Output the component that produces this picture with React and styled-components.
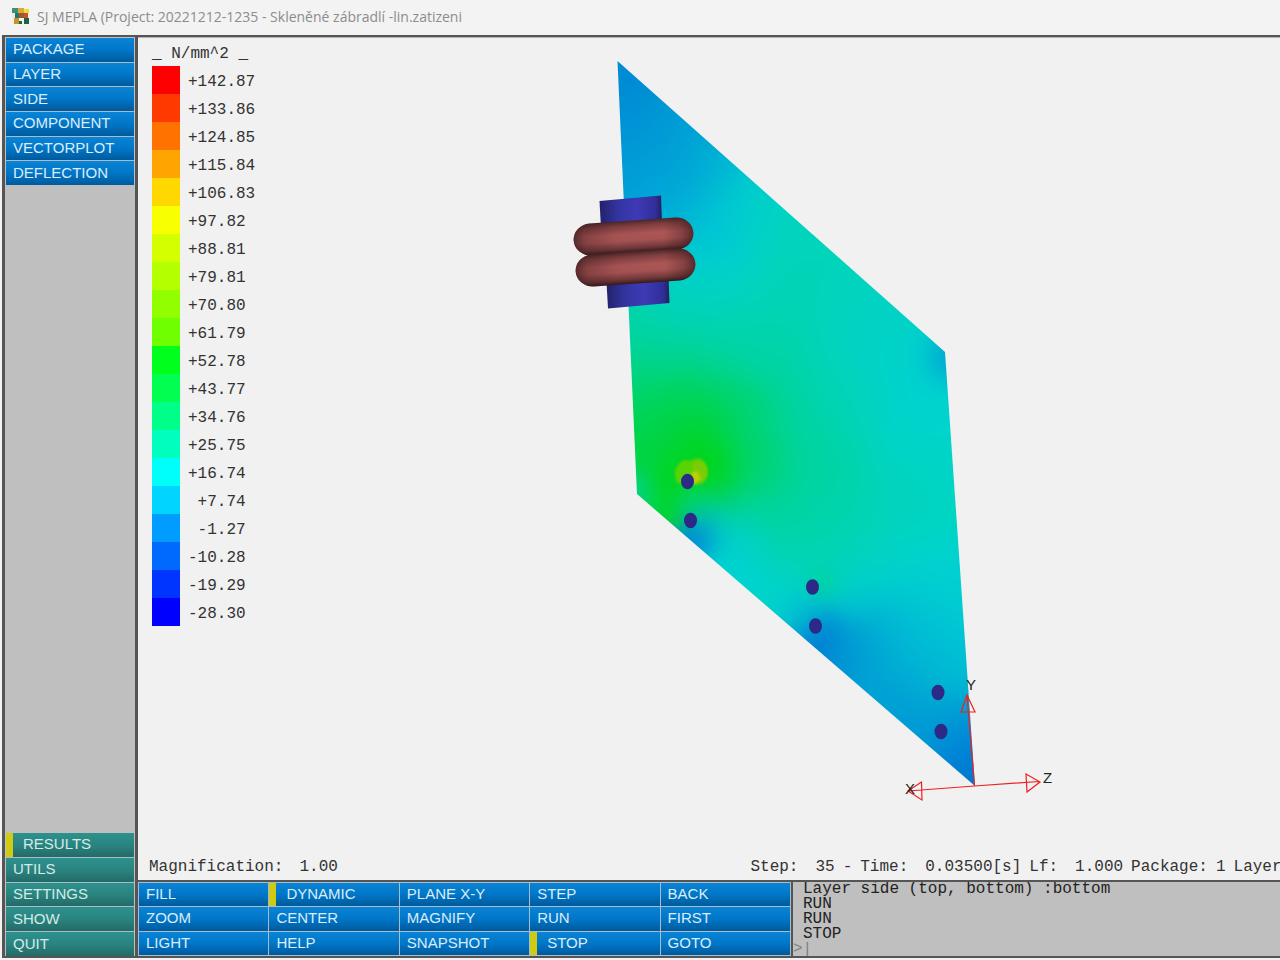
import React from 'react';
import styled, { createGlobalStyle, css } from 'styled-components';

const Global = createGlobalStyle`
  * { box-sizing: border-box; }
  body { margin: 0; background: #f1f1f1; }
`;

const MONO = '"Liberation Mono", monospace';
const SANS = '"Liberation Sans", sans-serif';

const Window = styled.div`
  display: flex;
  flex-direction: column;
  min-height: 100vh;
  padding: 0 0 2px 2px;
  background: #f2f2f2;
  overflow: hidden;
`;

const TitleBar = styled.header`
  display: flex;
  align-items: center;
  gap: 8px;
  height: 35px;
  padding: 0 0 2px 10px;
  background: #f3f3f3;
`;

const Title = styled.h1`
  margin: 0;
  font: 400 14px/20px "Open Sans", sans-serif;
  color: #8c8c8c;
  white-space: nowrap;
`;

const Body = styled.div`
  flex: 1;
  display: flex;
  border: solid #555;
  border-width: 2px 0 2px 3px;
`;

const Sidebar = styled.aside`
  display: flex;
  flex-direction: column;
  justify-content: space-between;
  flex: 0 0 133px;
  padding: 1px 1px 0 1px;
  border-right: 3px solid #555;
  background: #bfbfbf;
`;

const Menu = styled.nav`
  display: grid;
  grid-auto-rows: 1fr;
  gap: 1px;
  height: ${(p) => p.$height}px;
  background: #a9bccb;
`;

const MenuButton = styled.button`
  display: flex;
  align-items: center;
  min-width: 0;
  margin: 0;
  padding: 0 0 1px 7px;
  border: 0;
  font: 400 15px/16px ${SANS};
  color: #dcecf8;
  text-align: left;
  white-space: nowrap;
  background: linear-gradient(#0a84d6, #0076c8 50%, #005a9c);
  ${(p) => p.$tone === 'green' && css`
    color: #d4ebe8;
    background: linear-gradient(#2d918d, #2a8480 50%, #236a66);
  `}
  ${(p) => p.$active && css`
    padding-left: 10px;
    border-left: 7px solid #cfcb12;
  `}
`;

const Main = styled.main`
  flex: 1;
  min-width: 0;
  display: flex;
  flex-direction: column;
`;

const Viewport = styled.section`
  position: relative;
  flex: 1;
  display: flex;
  flex-direction: column;
  justify-content: space-between;
  border-top: 1px solid #b4b4b4;
  background: #f1f1f1;
  font: 400 16px/28px ${MONO};
  color: #333;
`;

const Scene = styled.svg`
  position: absolute;
  inset: 0;
  width: 100%;
  height: 100%;
`;

const Legend = styled.div`
  position: relative;
  padding: 0 0 0 14px;
`;

const LegendTitle = styled.div`
  height: 28px;
  line-height: 32px;
  white-space: pre;
`;

const LegendList = styled.ul`
  margin: 0;
  padding: 0;
  list-style: none;
`;

const LegendRow = styled.li`
  display: flex;
  gap: 8px;
  height: 28px;
  line-height: 32px;
  white-space: pre;
`;

const Swatch = styled.span`
  width: 28px;
  background: ${(p) => p.$color};
`;

const Status = styled.footer`
  position: relative;
  display: flex;
  padding-left: 11px;
  height: 28px;
  line-height: 30px;
  overflow: hidden;
  white-space: nowrap;
`;

const Magnification = styled.div`
  display: flex;
  gap: 16px;
  flex: 0 0 53%;
`;

const Readout = styled.div`
  display: flex;
  gap: 8px;
  flex: 1 0 auto;
  padding-left: 2px;
`;

const Field = styled.span`
  display: flex;
  gap: ${(p) => (p.$tight ? 8 : 17)}px;
`;

const Dock = styled.div`
  display: flex;
  height: 76px;
  border-top: 2px solid #555;
`;

const Tools = styled.nav`
  display: grid;
  grid-template-columns: repeat(5, 1fr);
  grid-auto-rows: 1fr;
  gap: 1px;
  flex: 0 0 655px;
  padding: 1px 1px 1px 1px;
  border-right: 2px solid #555;
  background: #a9bccb;
`;

const Console = styled.div`
  flex: 1;
  min-width: 0;
  background: #bfbfbf;
  font: 400 16px/15px ${MONO};
  color: #222;
  overflow: hidden;
`;

const Line = styled.div`
  height: 15px;
  padding-left: 10px;
  white-space: pre;
`;

const Prompt = styled.label`
  display: flex;
  height: 14px;
  color: #808080;
`;

const PromptInput = styled.input`
  flex: 1;
  min-width: 0;
  height: 14px;
  padding: 0;
  border: 0;
  outline: 0;
  background: transparent;
  font: inherit;
  color: inherit;
`;

const legend = [
  ['+142.87', '#ff0000'], ['+133.86', '#ff3a00'], ['+124.85', '#ff7200'], ['+115.84', '#ffa400'],
  ['+106.83', '#ffd800'], ['+97.82', '#f8ff00'], ['+88.81', '#d4ff00'], ['+79.81', '#b4ff00'],
  ['+70.80', '#92ff00'], ['+61.79', '#70ff00'], ['+52.78', '#00ff1c'], ['+43.77', '#00ff50'],
  ['+34.76', '#00ff88'], ['+25.75', '#00ffbe'], ['+16.74', '#00fff8'], [' +7.74', '#00d4ff'],
  [' -1.27', '#009cff'], ['-10.28', '#006aff'], ['-19.29', '#0034ff'], ['-28.30', '#0000ff'],
];

/* Stress samples on the pane: x, y, colour, reach */
const samples = [
  [618, 80, 0x008ad4], [640, 130, 0x0092d6], [690, 140, 0x00a2d4], [640, 180, 0x009ed8],
  [680, 190, 0x00a8d6], [722, 165, 0x00b8d4, 22], [752, 190, 0x00d0cc, 22], [690, 225, 0x00b8d6],
  [730, 215, 0x00ced4, 22], [780, 220, 0x00d4be], [712, 258, 0x00d2d4], [680, 290, 0x00d2c4],
  [640, 320, 0x00d4ac], [720, 300, 0x00d4bc], [800, 280, 0x00d4b6], [860, 310, 0x00d4be],
  [900, 330, 0x00d2c8], [947, 358, 0x0090d4, 15], [915, 375, 0x00d0d4], [880, 380, 0x00d4c4],
  [640, 365, 0x00d48c], [700, 350, 0x00d49c], [760, 350, 0x00d4aa], [840, 400, 0x00d4b4],
  [930, 430, 0x00d4cc], [640, 415, 0x00d454], [690, 410, 0x00d43c], [740, 420, 0x00d46c],
  [700, 447, 0x00d60c, 20], [650, 455, 0x00d43c, 22], [716, 470, 0x00d600, 16], [750, 465, 0x00d458, 22],
  [800, 430, 0x00d4a0], [636, 490, 0x00d4a0, 15], [668, 482, 0x00d610, 16], [668, 506, 0x00d430, 14],
  [690, 503, 0x00d488, 11], [716, 500, 0x00d44c, 16], [765, 500, 0x00d490], [700, 534, 0x0084da, 14],
  [714, 516, 0x00c8cc, 12], [735, 535, 0x00d0d4, 20], [745, 565, 0x00d2d4, 20], [785, 590, 0x00d4cc, 22],
  [790, 540, 0x00d4b0], [830, 500, 0x00d4a6], [900, 500, 0x00d4bc], [945, 490, 0x00d4c4],
  [850, 555, 0x00d4b8], [822, 583, 0x00d48c, 10], [900, 570, 0x00d4cc], [855, 595, 0x00ced0, 20],
  [803, 613, 0x00bcd4, 16], [822, 634, 0x0074d4, 16], [850, 650, 0x0090d4, 22], [870, 632, 0x00a4d4, 22],
  [905, 620, 0x00bcd4], [950, 595, 0x00d2d2], [960, 650, 0x00c4d4], [920, 655, 0x00b8d4],
  [895, 690, 0x00a0d4], [945, 682, 0x00bcd0, 18], [920, 720, 0x0098d4], [955, 710, 0x009cd4, 18],
  [962, 740, 0x0084d8, 20], [972, 776, 0x0078d0, 20],
];

const CELL = 5;

function fieldColor(x, y) {
  let total = 0;
  const rgb = [0, 0, 0];
  for (const [sx, sy, color, reach = 30] of samples) {
    const weight = Math.exp(-((x - sx) ** 2 + (y - sy) ** 2) / (2 * reach * reach)) + 1e-12;
    total += weight;
    rgb[0] += weight * (color >> 16);
    rgb[1] += weight * ((color >> 8) & 255);
    rgb[2] += weight * (color & 255);
  }
  return `rgb(${rgb.map((v) => Math.round(v / total)).join(',')})`;
}

/* Cells cover the pane plus a margin for the softening at its edges */
const cells = [];
for (let y = 50; y < 800; y += CELL) {
  const left = y < 494 ? 617 + ((y - 61) * 20) / 433 : 637 + ((y - 494) * 338) / 292;
  const right = y < 352 ? 617 + ((y - 61) * 328) / 291 : 945 + ((y - 352) * 30) / 434;
  const start = Math.floor((left - 25) / CELL) * CELL;
  for (let x = start; x < right + 25; x += CELL) {
    cells.push({ x, y, fill: fieldColor(x + CELL / 2, y + CELL / 2) });
  }
}

const holes = [[687.5, 481.5], [690.5, 520.5], [812.5, 587], [815.5, 626], [938, 692.5], [941, 731.5]];

function Ring({ cx, cy }) {
  return (
    <g transform={`translate(${cx} ${cy}) rotate(-4)`}>
      <rect x="-60" y="-16" width="120" height="32" rx="17" ry="16" fill="url(#ring)" />
      <rect x="-60" y="-16" width="120" height="32" rx="17" ry="16" fill="url(#ringEnds)" />
    </g>
  );
}

function PaneScene() {
  return (
    <Scene viewBox="138 38 1142 842" role="img" aria-label="Stress distribution on glass pane">
      <defs>
        <clipPath id="pane"><path d="M617.500 61 945 352 975 786 637 494z" /></clipPath>
        <filter id="soften" x="-5%" y="-5%" width="110%" height="110%" colorInterpolationFilters="sRGB">
          <feGaussianBlur stdDeviation="4" />
        </filter>
        <filter id="spotSoft" colorInterpolationFilters="sRGB"><feGaussianBlur stdDeviation="1.300" /></filter>
        <linearGradient id="ring" x1="0" y1="0" x2="0" y2="1">
          <stop offset="0" stopColor="#4c2628" />
          <stop offset=".16" stopColor="#803f40" />
          <stop offset=".42" stopColor="#ad5656" />
          <stop offset=".62" stopColor="#a85454" />
          <stop offset=".86" stopColor="#703738" />
          <stop offset="1" stopColor="#34191b" />
        </linearGradient>
        <linearGradient id="ringEnds">
          <stop offset="0" stopColor="#200c10" stopOpacity=".6" />
          <stop offset=".1" stopColor="#301418" stopOpacity=".3" />
          <stop offset=".35" stopColor="#301418" stopOpacity=".05" />
          <stop offset=".75" stopColor="#301418" stopOpacity="0" />
          <stop offset=".9" stopColor="#301418" stopOpacity=".3" />
          <stop offset="1" stopColor="#200c10" stopOpacity=".6" />
        </linearGradient>
        <linearGradient id="rod">
          <stop offset="0" stopColor="#22226c" />
          <stop offset=".3" stopColor="#3434a0" />
          <stop offset=".6" stopColor="#3e3ab6" />
          <stop offset=".9" stopColor="#302e98" />
          <stop offset="1" stopColor="#20205c" />
        </linearGradient>
      </defs>
      <g clipPath="url(#pane)">
        <g filter="url(#soften)" shapeRendering="crispEdges">
          {cells.map((c) => (
            <rect key={`${c.x}-${c.y}`} x={c.x} y={c.y} width={CELL} height={CELL} fill={c.fill} />
          ))}
        </g>
        <g filter="url(#spotSoft)">
          <path d="M677 483q-5-11 1-18 5-7 12-4 8-6 15 1 5 8 2 16-3 7-10 7z" fill="#5ad204" />
          <path d="M693 463q9-4 13 3 3 10-4 16l-10-2z" fill="#7ccc04" />
          <path d="M691 473l6-2 4 8-7 6z" fill="#bdd000" />
        </g>
      </g>
      {holes.map(([x, y]) => (
        <ellipse key={y} cx={x} cy={y} rx="6.500" ry="7.800" fill="#2c2a86" />
      ))}
      <path d="M599.500 201 661 195.500 662 224 601 228z" fill="url(#rod)" />
      <path d="M606.500 282 668.500 276 669.500 303 608 308.500z" fill="url(#rod)" />
      <path d="M596 256 676 249" stroke="#1c1428" strokeWidth="4" />
      <Ring cx={633.5} cy={236.5} />
      <Ring cx={635.5} cy={267.5} />
      <g fill="none" stroke="#f02020" strokeWidth="1.200">
        <path d="M974.500 786 967 695M961 712 967 695 975 712z" />
        <path d="M974.500 786 908 791M921.500 782 908 791 922 800z" />
        <path d="M974.500 786 1039 781.500M1026 774 1040 782 1027 792z" />
      </g>
      <g fill="#222" fontFamily="Liberation Sans, sans-serif" fontSize="15">
        <text x="966" y="690">Y</text>
        <text x="905" y="794">X</text>
        <text x="1043" y="783">Z</text>
      </g>
    </Scene>
  );
}

function AppIcon() {
  return (
    <svg width="17" height="17" viewBox="0 0 17 17" aria-hidden="true">
      <path fill="#f7f3d8" d="M0 0h17v17H0z" />
      <path fill="#3a9474" d="M0 0h6v5H0z" />
      <path fill="#e0a83c" d="M6 0h6v5H6z" />
      <path fill="#e8e03c" d="M12 1h5v4h-5z" />
      <path fill="#20786c" d="M3 5h4v5H3z" />
      <path fill="#9a5c28" d="M7 5h5v5H7z" />
      <path fill="#c8522c" d="M12 5h4v5h-4z" />
      <path fill="#f4e8d8" d="M0 5h3v5H0z" />
      <path fill="#c89034" d="M2 10h5v6H2z" />
      <path fill="#f4f4f4" d="M8 10h4v3H8z" />
      <path fill="#1c6448" d="M12 10h5v6h-5zM7 13h3v3H7z" />
    </svg>
  );
}

const topMenu = ['PACKAGE', 'LAYER', 'SIDE', 'COMPONENT', 'VECTORPLOT', 'DEFLECTION'];
const bottomMenu = ['RESULTS', 'UTILS', 'SETTINGS', 'SHOW', 'QUIT'];
const tools = [
  'FILL', 'DYNAMIC', 'PLANE X-Y', 'STEP', 'BACK',
  'ZOOM', 'CENTER', 'MAGNIFY', 'RUN', 'FIRST',
  'LIGHT', 'HELP', 'SNAPSHOT', 'STOP', 'GOTO',
];
const activeItems = ['RESULTS', 'DYNAMIC', 'STOP'];
const log = ['Layer side (top, bottom) :bottom', 'RUN', 'RUN', 'STOP'];

const renderButton = (name, tone) => (
  <MenuButton key={name} type="button" $tone={tone} $active={activeItems.includes(name)}>
    {name}
  </MenuButton>
);

export default function App() {
  return (
    <Window>
      <Global />
      <TitleBar>
        <AppIcon />
        <Title>SJ MEPLA (Project: 20221212-1235 - Skleněné zábradlí -lin.zatizeni</Title>
      </TitleBar>
      <Body>
        <Sidebar>
          <Menu $height={147}>{topMenu.map((n) => renderButton(n))}</Menu>
          <Menu $height={123}>{bottomMenu.map((n) => renderButton(n, 'green'))}</Menu>
        </Sidebar>
        <Main>
          <Viewport>
            <PaneScene />
            <Legend>
              <LegendTitle>_ N/mm^2 _</LegendTitle>
              <LegendList>
                {legend.map(([value, color]) => (
                  <LegendRow key={value}><Swatch $color={color} />{value}</LegendRow>
                ))}
              </LegendList>
            </Legend>
            <Status>
              <Magnification><span>Magnification:</span><span>1.00</span></Magnification>
              <Readout>
                <Field><span>Step:</span><span>35</span></Field>
                <span>-</span>
                <Field><span>Time:</span><span>0.03500[s]</span></Field>
                <Field><span>Lf:</span><span>1.000</span></Field>
                <Field $tight><span>Package:</span><span>1</span></Field>
                <span>Layer</span>
              </Readout>
            </Status>
          </Viewport>
          <Dock>
            <Tools>{tools.map((n) => renderButton(n))}</Tools>
            <Console>
              {log.map((text, i) => <Line key={i}>{text}</Line>)}
              <Prompt>
                &gt;
                <PromptInput aria-label="Command" defaultValue="|" />
              </Prompt>
            </Console>
          </Dock>
        </Main>
      </Body>
    </Window>
  );
}
